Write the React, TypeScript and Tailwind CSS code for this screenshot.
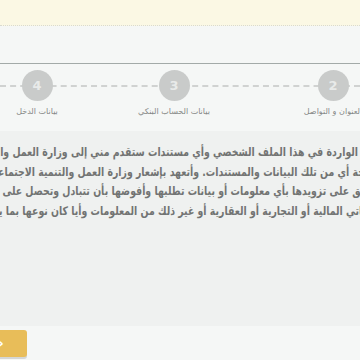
export default function App() {
    const steps = [
        { n: 4, label: "بيانات الدخل", offset: "ml-0" },
        { n: 3, label: "بيانات الحساب البنكي", offset: "ml-[63px]" },
        { n: 2, label: "العنوان و التواصل", offset: "ml-[85px]" },
    ]

    const lines = [
        { text: "الواردة في هذا الملف الشخصي وأي مستندات ستقدم مني إلى وزارة العمل والتنمية الاجتماعية", shift: "mr-[2px]" },
        { text: "صحة أي من تلك البيانات والمستندات. وأتعهد بإشعار وزارة العمل والتنمية الاجتماعية فورا", shift: "mr-[-14px]" },
        { text: "وأوافق على تزويدها بأي معلومات أو بيانات تطلبها وأفوضها بأن تتبادل وتحصل على بياناتي", shift: "mr-[-25px]" },
        { text: "معلوماتي المالية أو التجارية أو العقارية أو غير ذلك من المعلومات وأيا كان نوعها بما يتعلق", shift: "mr-[-29px]" },
    ]

    return (
        <div className="w-[360px] h-[360px] overflow-hidden bg-[#f5f7f6] font-['DejaVu_Sans',sans-serif]">
            {/* Top band */}
            <div className="h-[26px] bg-[#fbf8e4] border-b border-dotted border-[#d9dad0]" />

            {/* Progress steps */}
            <div className="mt-[37px] border-t border-[#a3aaa8]">
                <div className="relative mt-[6px] h-[31px]">
                    <div className="absolute left-0 right-0 top-[15px] border-t-2 border-dashed border-[#d0d2d1]" />
                </div>
                <div className="flex -mt-[31px] relative">
                    {steps.map((s) => (
                        <div key={s.n} className={`${s.offset} w-[74px] shrink-0 flex flex-col items-center`}>
                            <div className="w-[31px] h-[31px] rounded-full bg-[#c9cbca] flex items-center justify-center text-[13px] font-bold text-[#e8eae9]">
                                {s.n}
                            </div>
                            <div dir="rtl" className="mt-[6px] whitespace-nowrap text-[8px] leading-[10px] text-[#858786]">
                                {s.label}
                            </div>
                        </div>
                    ))}
                </div>
            </div>

            {/* Declaration text */}
            <div className="mt-[14px] h-[195px] bg-[#eff1f0] pt-[12px] overflow-hidden">
                {lines.map((l, i) => (
                    <div
                        key={i}
                        dir="rtl"
                        className={`${l.shift} whitespace-nowrap text-[12px] leading-[19.5px] font-bold text-[#727473] scale-x-[0.78] origin-right`}
                    >
                        {l.text}
                    </div>
                ))}
            </div>

            {/* Next button */}
            <div className="mt-[4px] ml-[-20px] w-[47px] h-[27px] rounded-[3px] bg-[#e8bd59] shadow-[0_2px_0_#d4d6d5] flex items-center justify-start pl-[18px] text-white text-[14px] font-bold">
                ›
            </div>
        </div>
    )
}
